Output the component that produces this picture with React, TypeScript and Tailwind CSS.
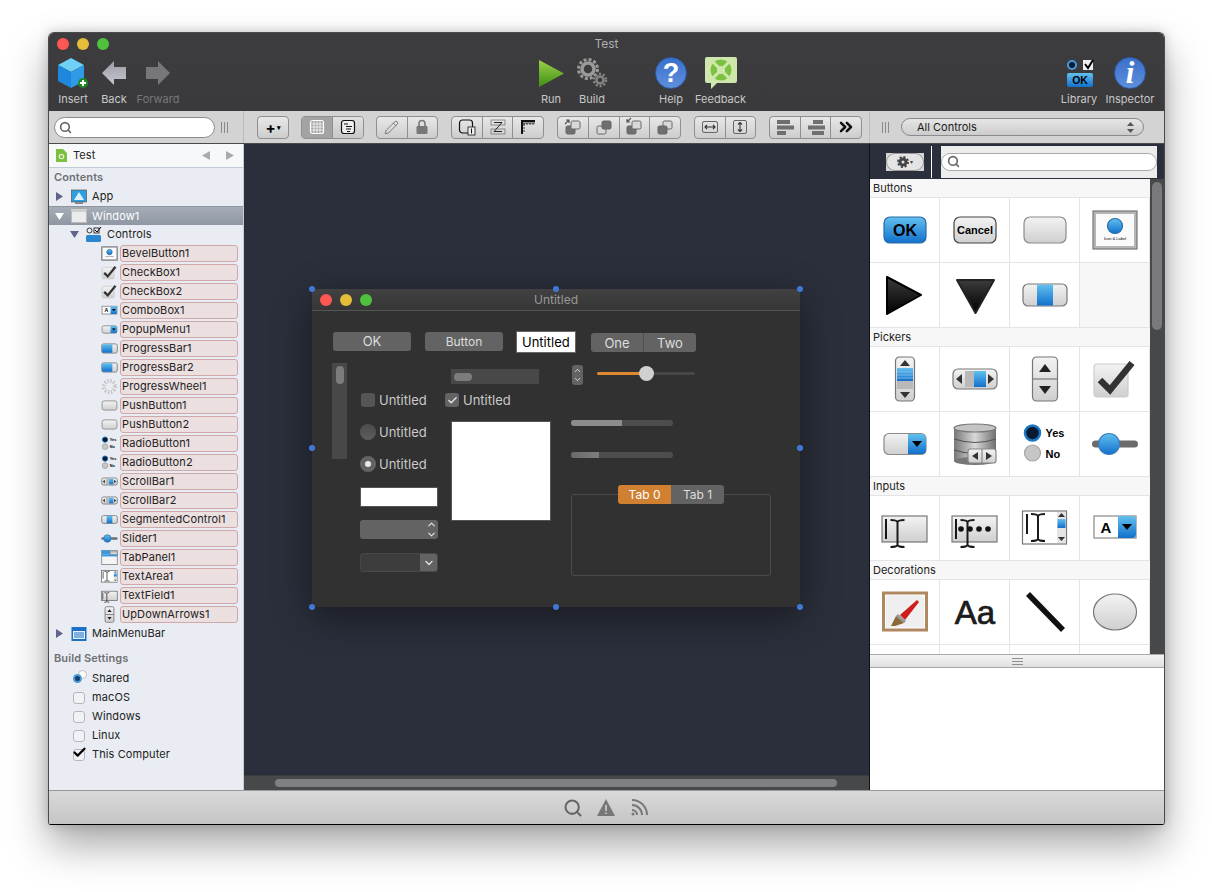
import type { ReactNode } from 'react';
import { ChevronsRight, ChevronDown, ChevronUp, Pencil, Search, Check } from 'lucide-react';

const Svg = ({ s = 48, children }: { s?: number; children: ReactNode }) => (
  <svg width={s} height={s} viewBox="0 0 48 48" strokeWidth={s < 30 ? 2.4 : 1.2} className="shrink-0">
    {children}
  </svg>
);

const Defs = () => (
  <svg className="absolute w-0 h-0">
    <defs>
      <linearGradient id="blue" x1="0" y1="0" x2="0" y2="1">
        <stop offset="0" stopColor="#62c0ee" />
        <stop offset="1" stopColor="#1270cc" />
      </linearGradient>
      <linearGradient id="gray" x1="0" y1="0" x2="0" y2="1">
        <stop offset="0" stopColor="#f3f3f3" />
        <stop offset="1" stopColor="#cfcfcf" />
      </linearGradient>
      <linearGradient id="dark" x1="0" y1="0" x2="0" y2="1">
        <stop offset="0" stopColor="#3c3c3c" />
        <stop offset="1" stopColor="#000" />
      </linearGradient>
      <linearGradient id="metal" x1="0" y1="0" x2="1" y2="0">
        <stop offset="0" stopColor="#777" />
        <stop offset="0.5" stopColor="#d9d9d9" />
        <stop offset="1" stopColor="#6f6f6f" />
      </linearGradient>
      <linearGradient id="run" x1="0" y1="0" x2="0" y2="1">
        <stop offset="0" stopColor="#9ad04a" />
        <stop offset="1" stopColor="#3f8f12" />
      </linearGradient>
      <linearGradient id="arrow" x1="0" y1="0" x2="0" y2="1">
        <stop offset="0" stopColor="#9d9da8" />
        <stop offset="1" stopColor="#c6c6d0" />
      </linearGradient>
    </defs>
  </svg>
);

const OkBtn = ({ s }: { s?: number }) => (
  <Svg s={s}>
    <rect x="3" y="11" width="42" height="26" rx="6" fill="url(#blue)" stroke="#2a6aa8" />
    <text x="24" y="30" textAnchor="middle" fontSize="16" fontWeight="700" fontFamily="Liberation Sans">OK</text>
  </Svg>
);
const CancelBtn = ({ s }: { s?: number }) => (
  <Svg s={s}>
    <rect x="3" y="11" width="42" height="26" rx="6" fill="url(#gray)" stroke="#444" />
    <text x="24" y="28" textAnchor="middle" fontSize="11" fontWeight="700" fontFamily="Liberation Sans">Cancel</text>
  </Svg>
);
const PushBtn = ({ s }: { s?: number }) => (
  <Svg s={s}>
    <rect x="3" y="11" width="42" height="26" rx="6" fill="url(#gray)" stroke="#8a8a8a" />
  </Svg>
);
const Bevel = ({ s }: { s?: number }) => (
  <Svg s={s}>
    <rect x="2" y="5" width="44" height="38" fill="#b5b5b5" stroke="#777" />
    <rect x="5" y="8" width="38" height="32" fill="#fafafa" />
    <circle cx="24" cy="20" r="7.5" fill="url(#blue)" stroke="#2a6aa8" />
    <text x="24" y="34" textAnchor="middle" fontSize="4" fontFamily="Liberation Sans">Icon &amp; Label</text>
  </Svg>
);
const DiscRight = () => (
  <Svg>
    <polygon points="6,6 40,24 6,43" fill="url(#dark)" stroke="#000" strokeWidth="2" strokeLinejoin="round" />
  </Svg>
);
const DiscDown = () => (
  <Svg>
    <polygon points="6,9 43,9 24.5,42" fill="url(#dark)" stroke="#222" strokeWidth="2" strokeLinejoin="round" />
  </Svg>
);
const Segment = ({ s }: { s?: number }) => (
  <Svg s={s}>
    <rect x="2" y="13" width="44" height="22" rx="5" fill="url(#gray)" stroke="#777" />
    <rect x="16" y="13.5" width="16" height="21" fill="url(#blue)" />
  </Svg>
);
const Progress = ({ s }: { s?: number }) => (
  <Svg s={s}>
    <rect x="2" y="11" width="44" height="26" rx="5" fill="url(#gray)" stroke="#777" />
    <rect x="3" y="12" width="29" height="24" rx="3" fill="url(#blue)" />
  </Svg>
);
const VScroll = () => (
  <Svg>
    <rect x="14.5" y="2" width="19" height="44" rx="4" fill="url(#gray)" stroke="#777" />
    <polygon points="24,5 29,11 19,11" fill="#333" />
    <rect x="16" y="13" width="16" height="13" fill="url(#blue)" />
    <path d="M16 17H32M16 20H32M16 23H32" stroke="#a8d4f2" strokeWidth="0.6" />
    <rect x="16" y="26" width="16" height="8" fill="#b9b9b9" />
    <polygon points="24,43 29,37 19,37" fill="#333" />
  </Svg>
);
const HScroll = ({ s }: { s?: number }) => (
  <Svg s={s}>
    <rect x="2" y="14" width="44" height="20" rx="5" fill="url(#gray)" stroke="#777" />
    <polygon points="5,24 11,19 11,29" fill="#333" />
    <rect x="14" y="16" width="9" height="16" fill="#b9b9b9" />
    <rect x="23" y="16" width="12" height="16" fill="url(#blue)" />
    <polygon points="43,24 37,19 37,29" fill="#333" />
  </Svg>
);
const UpDown = ({ s }: { s?: number }) => (
  <Svg s={s}>
    <rect x="11.5" y="2" width="25" height="44" rx="4" fill="url(#gray)" stroke="#777" />
    <line x1="11.5" y1="24" x2="36.5" y2="24" stroke="#777" />
    <polygon points="24,9 30,17 18,17" fill="#222" />
    <polygon points="24,39 30,31 18,31" fill="#222" />
  </Svg>
);
const CheckIcon = ({ s }: { s?: number }) => (
  <Svg s={s}>
    <rect x="3" y="9" width="34" height="33" rx="3" fill="url(#gray)" stroke="#ccc" />
    <path d="M9 25 L19 35 L41 8" fill="none" stroke="#333" strokeWidth="6.5" strokeLinejoin="miter" />
  </Svg>
);
const Popup = ({ s }: { s?: number }) => (
  <Svg s={s}>
    <rect x="3" y="13.5" width="42" height="21" rx="5" fill="url(#gray)" stroke="#8a8a8a" />
    <path d="M27 14 H41 a4 4 0 0 1 4 4 V30 a4 4 0 0 1 -4 4 H27 Z" fill="url(#blue)" />
    <polygon points="31,21 41,21 36,27" fill="#000" />
  </Svg>
);
const Db = () => (
  <Svg>
    <rect x="3" y="8" width="42" height="33" fill="url(#metal)" />
    <ellipse cx="24" cy="8" rx="21" ry="4" fill="#c4c4c4" stroke="#777" />
    <path d="M3 19 Q24 26 45 19 M3 30 Q24 37 45 30" fill="none" stroke="#555" />
    <ellipse cx="24" cy="41" rx="21" ry="4" fill="#777" />
    <rect x="17" y="29" width="28" height="14" rx="2.5" fill="url(#gray)" stroke="#888" />
    <line x1="31" y1="29" x2="31" y2="43" stroke="#888" />
    <polygon points="21,36 27,32 27,40" fill="#333" />
    <polygon points="41,36 35,32 35,40" fill="#333" />
  </Svg>
);
const Radio = ({ s }: { s?: number }) => (
  <Svg s={s}>
    <circle cx="11.5" cy="13" r="7.5" fill="#0a1a33" stroke="#1a78c2" strokeWidth="2.5" />
    <circle cx="11.5" cy="33" r="8" fill="#c6c6c6" stroke="#a5a5a5" />
    <text x="24.5" y="17" fontSize="11" fontWeight="700" fontFamily="Liberation Sans">Yes</text>
    <text x="24.5" y="38" fontSize="11" fontWeight="700" fontFamily="Liberation Sans">No</text>
  </Svg>
);
const Slider = ({ s }: { s?: number }) => (
  <Svg s={s}>
    <rect x="1" y="20.5" width="46" height="7" rx="3.5" fill="#6b6b6b" />
    <circle cx="18" cy="24" r="10.5" fill="url(#blue)" stroke="#3a7fb8" />
  </Svg>
);
const Ibeam = ({ x, y1, y2 }: { x: number; y1: number; y2: number }) => (
  <path
    d={`M${x - 7} ${y1} Q${x - 1} ${y1} ${x} ${y1 + 2} Q${x + 1} ${y1} ${x + 7} ${y1} M${x} ${y1 + 2} V${y2 - 2} M${x - 7} ${y2} Q${x - 1} ${y2} ${x} ${y2 - 2} Q${x + 1} ${y2} ${x + 7} ${y2}`}
    fill="none"
    stroke="#1a1a1a"
    strokeWidth="2"
  />
);
const TextField = ({ s }: { s?: number }) => (
  <Svg s={s}>
    <rect x="1" y="12" width="45" height="26" fill="url(#gray)" stroke="#777" />
    <line x1="5" y1="15" x2="5" y2="35" stroke="#000" strokeWidth="1.8" />
    <Ibeam x={16.5} y1={16} y2={43} />
  </Svg>
);
const Password = () => (
  <Svg>
    <rect x="1" y="12" width="45" height="26" fill="url(#gray)" stroke="#777" />
    <line x1="5" y1="15" x2="5" y2="35" stroke="#000" strokeWidth="1.8" />
    <Ibeam x={16.5} y1={16} y2={43} />
    <circle cx="10" cy="25" r="2.8" fill="#111" />
    <circle cx="19" cy="25" r="2.8" fill="#111" />
    <circle cx="28" cy="25" r="2.8" fill="#111" />
    <circle cx="37" cy="25" r="2.8" fill="#111" />
  </Svg>
);
const TextArea = ({ s }: { s?: number }) => (
  <Svg s={s}>
    <rect x="1.5" y="7" width="44" height="33" fill="#fff" stroke="#777" />
    <line x1="6" y1="10" x2="6" y2="30" stroke="#000" strokeWidth="1.8" />
    <Ibeam x={17} y1={10} y2={37} />
    <rect x="36" y="8" width="9" height="31" fill="#e4e4e4" />
    <polygon points="40.5,9 44,13 37,13" fill="#333" />
    <rect x="36.5" y="15" width="8" height="9" fill="url(#blue)" />
    <polygon points="40.5,37 44,33 37,33" fill="#333" />
  </Svg>
);
const Combo = ({ s }: { s?: number }) => (
  <Svg s={s}>
    <rect x="3" y="12" width="42" height="22" fill="#fff" stroke="#888" />
    <path d="M27 12 H41 a4 4 0 0 1 4 4 V30 a4 4 0 0 1 -4 4 H27 Z" fill="url(#blue)" />
    <text x="15" y="29" textAnchor="middle" fontSize="15" fontWeight="700" fontFamily="Liberation Sans">A</text>
    <polygon points="31,20 41,20 36,26" fill="#000" />
  </Svg>
);
const CanvasIcon = () => (
  <Svg>
    <rect x="2.5" y="5" width="43" height="37" fill="#fff" stroke="#b08860" strokeWidth="3" />
    <rect x="5" y="7.5" width="38" height="32" fill="#efefef" />
    <path d="M19 27 L36 12 L38 14 L24 32 Z" fill="#cf1c1c" />
    <path d="M17 26 L25 33 L23 35 L15 28 Z" fill="#999" />
    <path d="M15 28 L23 35 L14 38 L10 38 Z" fill="#8a6a3a" />
  </Svg>
);
const AaIcon = () => (
  <Svg>
    <text x="24" y="36" textAnchor="middle" fontSize="33" fontFamily="Liberation Sans" fill="#1c1c1c" stroke="#1c1c1c" strokeWidth="0.7">Aa</text>
  </Svg>
);
const LineIcon = () => (
  <Svg>
    <line x1="7" y1="6" x2="42" y2="42" stroke="#111" strokeWidth="5.5" />
  </Svg>
);
const Oval = () => (
  <Svg>
    <ellipse cx="24" cy="24" rx="21.5" ry="18" fill="url(#gray)" stroke="#777" />
  </Svg>
);
const Spinner = ({ s }: { s?: number }) => (
  <Svg s={s}>
    <circle cx="24" cy="24" r="16" fill="none" stroke="#c4c4c4" strokeWidth="11" strokeDasharray="4 4.4" />
  </Svg>
);
const TabPanel = ({ s }: { s?: number }) => (
  <Svg s={s}>
    <rect x="2" y="4" width="44" height="40" fill="#f4f4f4" stroke="#888" />
    <rect x="2" y="4" width="24" height="12" fill="#3b97dc" />
    <rect x="26" y="8" width="20" height="8" fill="#ddd" stroke="#888" />
    <rect x="2" y="16" width="44" height="5" fill="#3b97dc" />
  </Svg>
);

const Light = ({ c }: { c: string }) => <div className={`w-3 h-3 rounded-full ${c}`} />;

const Tool = ({ label, w, ml, dim, children }: { label: string; w: string; ml?: string; dim?: boolean; children: ReactNode }) => (
  <div className={`flex flex-col items-center ${w} ${ml ?? ''}`}>
    <div className="h-[36px] flex items-center justify-center">{children}</div>
    <div className={`mt-[1px] text-[11px] leading-[14px] whitespace-nowrap ${dim ? 'text-[#77777a]' : 'text-[#c8c8c8]'}`}>{label}</div>
  </div>
);

const Seg = ({ w, ml, children }: { w: string; ml: string; children: ReactNode[] }) => (
  <div className={`flex h-[23px] ${w} ${ml} rounded-[4px] border border-[#8f8f8f] bg-linear-to-b from-[#e8e8e8] to-[#cdcdcd] divide-x divide-[#8f8f8f] overflow-hidden`}>
    {children.map((c, i) => (
      <div key={i} className="flex-1 flex items-center justify-center">{c}</div>
    ))}
  </div>
);

const Ticks = () => (
  <div className="flex gap-[2px] h-[11px]">
    <div className="w-px bg-[#8a8a8a]" />
    <div className="w-px bg-[#8a8a8a]" />
    <div className="w-px bg-[#8a8a8a]" />
  </div>
);

const I20 = ({ children }: { children: ReactNode }) => (
  <svg width="20" height="20" viewBox="0 0 20 20" fill="none">{children}</svg>
);

const Overlap = ({ top, arrow }: { top: boolean; arrow?: 'up' | 'down' }) => (
  <I20>
    <rect x="3" y="9" width="9" height="8" rx="1.5" fill={top ? '#d8d8d8' : '#6f6f6f'} stroke="#666" />
    <rect x="8" y="4" width="9" height="8" rx="1.5" fill={top ? '#6f6f6f' : '#d8d8d8'} stroke="#666" />
    {arrow === 'up' && <path d="M2 7 L6 3 M3 3 H6 V6" stroke="#555" strokeWidth="1.2" />}
    {arrow === 'down' && <path d="M7 1 L3 5 M3 2 V5 H6" stroke="#555" strokeWidth="1.2" />}
  </I20>
);

const Toolbar = () => (
  <div className="h-[33px] flex items-center bg-[#d3d3d3] border-b border-[#4a4a4a]">
    <div className="w-[195px] h-full flex items-center border-r border-[#bbb] pl-[5px]">
      <div className="w-[161px] h-[21px] rounded-full bg-white border border-[#8a8a8a] flex items-center pl-[4px]">
        <Search size={13} strokeWidth={3} className="text-[#666]" />
      </div>
      <div className="ml-[6px]"><Ticks /></div>
    </div>
    <Seg w="w-[32px]" ml="ml-[13px]">
      {[<span key="a" className="flex items-center font-bold text-[15px] leading-none text-black">+<span className="text-[7px] ml-[1px]">▾</span></span>]}
    </Seg>
    <div className="ml-[12px] flex h-[23px] w-[63px] rounded-[4px] border border-[#8f8f8f] overflow-hidden">
      <div className="flex-1 bg-[#a3a3a3] flex items-center justify-center border-r border-[#8f8f8f]">
        <I20>
          <rect x="3.5" y="3.5" width="13" height="13" rx="2" stroke="#fff" strokeWidth="1.2" />
          <path d="M7 4V16M10 4V16M13 4V16M4 7H16M4 10H16M4 13H16" stroke="#fff" strokeWidth="0.8" />
        </I20>
      </div>
      <div className="flex-1 bg-linear-to-b from-[#e0e0e0] to-[#c8c8c8] flex items-center justify-center">
        <I20>
          <rect x="3.5" y="3.5" width="13" height="13" rx="2.5" fill="#eee" stroke="#111" strokeWidth="1.2" />
          <path d="M6 7H10M8 9.5H14M8 12H13M9 14.5H12" stroke="#111" strokeWidth="1" />
        </I20>
      </div>
    </div>
    <Seg w="w-[62px]" ml="ml-[12px]">
      {[
        <Pencil key="p" size={15} strokeWidth={1} className="text-[#444]" />,
        <I20 key="l">
          <rect x="4.5" y="9" width="11" height="8" rx="1" fill="#777" />
          <path d="M7 9V6.5a3 3 0 0 1 6 0V9" stroke="#777" strokeWidth="1.6" />
        </I20>,
      ]}
    </Seg>
    <Seg w="w-[93px]" ml="ml-[13px]">
      {[
        <I20 key="a">
          <rect x="2.5" y="3" width="13" height="13" rx="3" stroke="#111" strokeWidth="1.2" />
          <rect x="11" y="10" width="7" height="8" fill="#eee" stroke="#111" strokeWidth="0.8" />
          <path d="M14.5 11.5V16.5" stroke="#111" />
        </I20>,
        <I20 key="b">
          <rect x="3" y="3" width="14" height="5" stroke="#777" strokeWidth="0.8" />
          <rect x="3" y="12" width="14" height="5" stroke="#777" strokeWidth="0.8" />
          <path d="M6 5.5H14L6 14.5H14" stroke="#222" strokeWidth="1" />
        </I20>,
        <I20 key="c">
          <path d="M3 3H17V5H5V17H3Z" fill="#111" />
          <path d="M5 6H17M6 6V8M9 6V8M12 6V8M15 6V8M3 8H7M3 11H7M3 14H7" stroke="#111" strokeWidth="0.8" />
        </I20>,
      ]}
    </Seg>
    <Seg w="w-[124px]" ml="ml-[13px]">
      {[
        <Overlap key="a" top={false} arrow="up" />,
        <Overlap key="b" top />,
        <Overlap key="c" top={false} arrow="down" />,
        <I20 key="d">
          <rect x="8" y="4" width="9" height="8" rx="1.5" fill="#d8d8d8" stroke="#666" />
          <rect x="3" y="9" width="9" height="8" rx="1.5" fill="#6f6f6f" stroke="#666" />
        </I20>,
      ]}
    </Seg>
    <Seg w="w-[62px]" ml="ml-[13px]">
      {[
        <I20 key="a">
          <rect x="2.5" y="4.5" width="15" height="11" rx="1.5" stroke="#666" />
          <path d="M5 10H15M7 8L5 10L7 12M13 8L15 10L13 12" stroke="#333" strokeWidth="1.1" />
        </I20>,
        <I20 key="b">
          <rect x="3.5" y="3.5" width="13" height="13" rx="1.5" stroke="#666" />
          <path d="M10 5.5V14.5M8 7.5L10 5.5L12 7.5M8 12.5L10 14.5L12 12.5" stroke="#333" strokeWidth="1.1" />
        </I20>,
      ]}
    </Seg>
    <Seg w="w-[93px]" ml="ml-[13px]">
      {[
        <I20 key="a">
          <rect x="2" y="3" width="13" height="4" fill="#6f6f6f" />
          <rect x="2" y="8.5" width="17" height="4" fill="#6f6f6f" />
          <rect x="2" y="14" width="9" height="4" fill="#6f6f6f" />
        </I20>,
        <I20 key="b">
          <rect x="7" y="3" width="10" height="4" fill="#6f6f6f" />
          <rect x="2" y="8.5" width="17" height="4" fill="#6f6f6f" />
          <rect x="6" y="14" width="12" height="4" fill="#6f6f6f" />
        </I20>,
        <ChevronsRight key="c" size={20} strokeWidth={3} className="text-[#111]" />,
      ]}
    </Seg>
    <div className="ml-[7px] w-px h-full bg-[#bbb]" />
    <div className="ml-[12px]"><Ticks /></div>
    <div className="ml-[12px] w-[243px] h-[18px] rounded-full border border-[#8a8a8a] bg-linear-to-b from-[#e6e6e6] to-[#cccccc] flex items-center justify-between pl-[15px] pr-[9px] text-[11px] text-[#1a1a1a]">
      <span>All Controls</span>
      <svg width="7" height="11" viewBox="0 0 7 11">
        <polygon points="3.5,0 7,4 0,4" fill="#555" />
        <polygon points="3.5,11 7,7 0,7" fill="#555" />
      </svg>
    </div>
  </div>
);

const TreeItems: [string, (p: { s?: number }) => ReactNode][] = [
  ['BevelButton1', Bevel],
  ['CheckBox1', CheckIcon],
  ['CheckBox2', CheckIcon],
  ['ComboBox1', Combo],
  ['PopupMenu1', Popup],
  ['ProgressBar1', Progress],
  ['ProgressBar2', Progress],
  ['ProgressWheel1', Spinner],
  ['PushButton1', PushBtn],
  ['PushButton2', PushBtn],
  ['RadioButton1', Radio],
  ['RadioButton2', Radio],
  ['ScrollBar1', HScroll],
  ['ScrollBar2', HScroll],
  ['SegmentedControl1', Segment],
  ['Slider1', Slider],
  ['TabPanel1', TabPanel],
  ['TextArea1', TextArea],
  ['TextField1', TextField],
  ['UpDownArrows1', UpDown],
];

const Tri = ({ down, white }: { down?: boolean; white?: boolean }) => (
  <svg width="9" height="9" viewBox="0 0 9 9" className="shrink-0">
    <polygon points={down ? '0,1 9,1 4.5,8' : '1,0 8,4.5 1,9'} fill={white ? '#fff' : '#62628a'} />
  </svg>
);

const CheckRow = ({ label, on, radio }: { label: string; on?: boolean; radio?: boolean }) => (
  <div className="h-[19px] flex items-center pl-[24px] text-[#222]">
    <div className="w-[12px] h-[12px] relative">
      {radio ? (
        <>
          <div className="absolute left-[5px] top-[-3px] w-[9px] h-[9px] rounded-full bg-white border border-[#bdbdbd]" />
          <div className="absolute left-[0px] top-[1px] w-[9px] h-[9px] rounded-full bg-[#123f6f] border-[2px] border-[#4b9ad6]" />
        </>
      ) : (
        <div className="w-[12px] h-[12px] rounded-[3px] border border-[#b4b8be] bg-[#f0f2f5]" />
      )}
      {on && <Check size={15} strokeWidth={3.5} className="absolute left-[-1px] top-[-4px] text-black" />}
    </div>
    <span className="ml-[7px] text-[11px] tracking-[0.1px]">{label}</span>
  </div>
);

const Sidebar = () => (
  <div className="w-[195px] shrink-0 bg-[#e9edf3] border-r border-[#c8ccd2] text-[11px] tracking-[0.1px] text-[#222]">
    <div className="h-[24px] bg-[#f7f8fa] border-b border-[#c3ccd6] flex items-center pl-[7px]">
      <svg width="11" height="13" viewBox="0 0 11 13">
        <path d="M0 0H7L11 4V13H0Z" fill="#7cc040" />
        <circle cx="5.5" cy="7.5" r="2.2" fill="none" stroke="#e4f4d0" strokeWidth="1.2" />
      </svg>
      <span className="ml-[6px]">Test</span>
      <div className="ml-auto mr-[8px] flex gap-[16px]">
        <svg width="9" height="9" viewBox="0 0 9 9"><polygon points="9,0 9,9 1,4.5" fill="#aaa" /></svg>
        <svg width="9" height="9" viewBox="0 0 9 9"><polygon points="0,0 0,9 8,4.5" fill="#aaa" /></svg>
      </div>
    </div>
    <div className="h-[19px] flex items-center pl-[5px] font-semibold text-[#6f7073]">Contents</div>
    <div className="h-[19px] flex items-center pl-[6px]">
      <Tri />
      <svg width="16" height="16" viewBox="0 0 16 16" className="ml-[7px]">
        <rect x="0.5" y="1" width="15" height="12" fill="#2f9fe0" stroke="#555" strokeWidth="0.7" />
        <path d="M8 3L3 11H13Z" fill="#dff1ff" />
        <rect x="4" y="13" width="8" height="2" fill="#888" />
      </svg>
      <span className="ml-[5px]">App</span>
    </div>
    <div className="h-[19px] flex items-center pl-[6px] bg-linear-to-b from-[#a6adb7] to-[#8e97a3] border-t border-[#8e96a1] text-white">
      <Tri down white />
      <div className="ml-[7px] w-[16px] h-[14px] bg-[#ececec] border border-[#bbb] border-t-[3px] border-t-[#d0d0d0]" />
      <span className="ml-[5px]">Window1</span>
    </div>
    <div className="h-[19px] flex items-center pl-[21px]">
      <Tri down />
      <svg width="16" height="16" viewBox="0 0 16 16" className="ml-[7px]">
        <circle cx="3.5" cy="3.5" r="2.5" fill="none" stroke="#333" />
        <rect x="8" y="1" width="5" height="5" fill="none" stroke="#333" />
        <path d="M9 3L11 5L15 0" fill="none" stroke="#000" />
        <rect x="0" y="8" width="15" height="7" rx="1.5" fill="#2a86d0" />
      </svg>
      <span className="ml-[5px]">Controls</span>
    </div>
    {TreeItems.map(([name, Icon]) => (
      <div key={name} className="h-[19px] flex items-center pl-[52px]">
        <Icon s={17} />
        <div className="ml-[2px] w-[118px] h-[17px] rounded-[3px] bg-[#ebdfe0] border border-[#cfa9a9] pl-[1px] leading-[15px]">{name}</div>
      </div>
    ))}
    <div className="h-[19px] flex items-center pl-[6px]">
      <Tri />
      <svg width="16" height="16" viewBox="0 0 16 16" className="ml-[7px]">
        <rect x="0.5" y="1" width="15" height="14" fill="#1f6fc4" />
        <rect x="2" y="5" width="12" height="8" fill="#e6f0fa" />
        <path d="M3 7H13M3 9H13M3 11H13" stroke="#1f6fc4" />
      </svg>
      <span className="ml-[5px]">MainMenuBar</span>
    </div>
    <div className="h-[26px] flex items-end pb-[3px] pl-[5px] font-semibold text-[#6f7073]">Build Settings</div>
    <CheckRow label="Shared" radio />
    <CheckRow label="macOS" />
    <CheckRow label="Windows" />
    <CheckRow label="Linux" />
    <CheckRow label="This Computer" on />
  </div>
);

const Handle = ({ c }: { c: string }) => (
  <div className={`absolute w-[6px] h-[6px] rounded-full bg-[#3f79d8] ${c}`} />
);

const Untitled = ({ c }: { c: string }) => (
  <span className={`absolute text-[13px] leading-[16px] text-[#c9c9c9] ${c}`}>Untitled</span>
);

const DesignWindow = () => (
  <div className="absolute left-[68px] top-[145px] w-[488px] h-[318px] bg-[#313131] shadow-[0_10px_36px_rgba(0,0,0,0.45)]">
    <div className="h-[22px] bg-linear-to-b from-[#414141] to-[#363636] border-b border-[#565656] grid grid-cols-[1fr_auto_1fr] items-center">
      <div className="flex gap-[8px] pl-[8px]">
        <Light c="bg-[#fc5753]" />
        <Light c="bg-[#e6bd3b]" />
        <Light c="bg-[#4fc23d]" />
      </div>
      <span className="text-[12px] text-[#999]">Untitled</span>
    </div>

    <div className="absolute left-[21px] top-[43px] w-[78px] h-[19px] rounded-[3px] bg-[#636363] text-[13px] text-[#ddd] text-center leading-[19px]">OK</div>
    <div className="absolute left-[113px] top-[43px] w-[78px] h-[19px] rounded-[3px] bg-[#636363] text-[12px] text-[#ddd] text-center leading-[19px]">Button</div>
    <div className="absolute left-[204px] top-[42px] w-[60px] h-[22px] bg-white border border-[#666] text-[13px] text-black pl-[5px] leading-[21px]">Untitled</div>
    <div className="absolute left-[279px] top-[44px] w-[105px] h-[19px] rounded-[3px] bg-[#636363] flex text-[13px] text-[#ddd] leading-[20px]">
      <div className="w-[53px] text-center border-r border-[#505050]">One</div>
      <div className="flex-1 text-center">Two</div>
    </div>

    <div className="absolute left-[20px] top-[74px] w-[15px] h-[96px] bg-[#484848]">
      <div className="ml-[4px] mt-[3px] w-[8px] h-[18px] rounded-full bg-[#7c7c7c]" />
    </div>
    <div className="absolute left-[139px] top-[80px] w-[88px] h-[15px] bg-[#484848]">
      <div className="ml-[3px] mt-[4px] w-[18px] h-[8px] rounded-full bg-[#7c7c7c]" />
    </div>

    <div className="absolute left-[49px] top-[104px] w-[14px] h-[14px] rounded-[3px] bg-[#555]" />
    <Untitled c="left-[67px] top-[103px]" />
    <div className="absolute left-[133px] top-[104px] w-[14px] h-[14px] rounded-[3px] bg-[#636363] flex items-center justify-center">
      <Check size={11} strokeWidth={3} className="text-[#e4e4e4]" />
    </div>
    <Untitled c="left-[151px] top-[103px]" />
    <div className="absolute left-[48px] top-[135px] w-[16px] h-[16px] rounded-full bg-linear-to-b from-[#4c4c4c] to-[#5c5c5c]" />
    <Untitled c="left-[67px] top-[135px]" />
    <div className="absolute left-[48px] top-[167px] w-[16px] h-[16px] rounded-full bg-[#636363] flex items-center justify-center">
      <div className="w-[6px] h-[6px] rounded-full bg-[#e8e8e8]" />
    </div>
    <Untitled c="left-[67px] top-[167px]" />

    <div className="absolute left-[48px] top-[198px] w-[78px] h-[20px] bg-white border border-[#555]" />
    <div className="absolute left-[139px] top-[132px] w-[100px] h-[100px] bg-white border border-[#555]" />
    <div className="absolute left-[48px] top-[231px] w-[78px] h-[19px] rounded-[3px] bg-[#636363] flex items-center justify-end pr-[1px]">
      <div className="flex flex-col -space-y-[1px]">
        <ChevronUp size={11} strokeWidth={2.5} className="text-[#e4e4e4]" />
        <ChevronDown size={11} strokeWidth={2.5} className="text-[#e4e4e4]" />
      </div>
    </div>
    <div className="absolute left-[48px] top-[264px] w-[78px] h-[19px] rounded-[3px] bg-[#3d3d3d] border border-[#484848] flex justify-end overflow-hidden">
      <div className="w-[17px] bg-[#636363] flex items-center justify-center">
        <ChevronDown size={12} strokeWidth={2.5} className="text-[#e4e4e4]" />
      </div>
    </div>

    <div className="absolute left-[260px] top-[76px] w-[11px] h-[20px] rounded-[3px] bg-[#636363] flex flex-col items-center justify-center">
      <ChevronUp size={9} strokeWidth={2.5} className="text-[#ddd]" />
      <ChevronDown size={9} strokeWidth={2.5} className="text-[#ddd]" />
    </div>
    <div className="absolute left-[285px] top-[83px] w-[98px] h-[3px] rounded-full bg-[#474747]">
      <div className="w-[45px] h-[3px] rounded-l-full bg-[#df8a2f]" />
    </div>
    <div className="absolute left-[327px] top-[77px] w-[15px] h-[15px] rounded-full bg-[#d0d0d0]" />

    <div className="absolute left-[259px] top-[131px] w-[102px] h-[6px] rounded-[3px] bg-[#4d4d4d] overflow-hidden">
      <div className="w-[51px] h-full bg-[#8c8c8c]" />
    </div>
    <div className="absolute left-[259px] top-[163px] w-[102px] h-[6px] rounded-[3px] bg-[#4d4d4d] overflow-hidden">
      <div className="w-[28px] h-full bg-linear-to-r from-[#6a6a6a] to-[#7e7e7e]" />
    </div>

    <div className="absolute left-[259px] top-[205px] w-[200px] h-[82px] rounded-[3px] border border-[#4b4b4b]" />
    <div className="absolute left-[306px] top-[196px] w-[106px] h-[19px] rounded-[3px] overflow-hidden flex text-[12px] leading-[19px]">
      <div className="w-[53px] bg-[#d08030] text-center text-white">Tab 0</div>
      <div className="flex-1 bg-[#636363] text-center text-[#ddd]">Tab 1</div>
    </div>

    <Handle c="left-[-3px] top-[-3px]" />
    <Handle c="left-[241px] top-[-3px]" />
    <Handle c="left-[485px] top-[-3px]" />
    <Handle c="left-[-3px] top-[156px]" />
    <Handle c="left-[485px] top-[156px]" />
    <Handle c="left-[-3px] top-[315px]" />
    <Handle c="left-[241px] top-[315px]" />
    <Handle c="left-[485px] top-[315px]" />
  </div>
);

const Section = ({ title, children }: { title: string; children: ReactNode[] }) => (
  <>
    <div className="h-[19px] bg-[#f7f7f7] border-b border-[#e4e4e4] pl-[3px] text-[11px] leading-[18px] text-[#222]">{title}</div>
    <div className="grid grid-cols-4">
      {children.map((c, i) => (
        <div key={i} className={`h-[65px] flex items-center justify-center border-r border-b border-[#e4e4e4] ${c ? 'bg-white' : 'bg-[#f7f7f7]'}`}>{c}</div>
      ))}
    </div>
  </>
);

const Library = () => (
  <div className="w-[294px] shrink-0 flex flex-col bg-white">
    <div className="h-[35px] bg-[#2b2f3b] flex items-center">
      <div className="ml-[16px] w-[38px] h-[18px] bg-[#d6d6d6]">
        <div className="h-[18px] rounded-full border border-[#9a9a9a] bg-[#e4e4e4] flex items-center justify-center text-[#444]">
          <svg width="12" height="12" viewBox="0 0 12 12">
            <circle cx="6" cy="6" r="3" fill="none" stroke="#444" strokeWidth="3" />
            <circle cx="6" cy="6" r="5" fill="none" stroke="#444" strokeWidth="2" strokeDasharray="2 1.9" />
          </svg>
          <span className="text-[6px] ml-[1px]">▾</span>
        </div>
      </div>
      <div className="ml-[7px] w-px h-[32px] bg-white" />
      <div className="ml-[9px] w-[216px] h-[32px] bg-[#ededed] flex items-center">
        <div className="w-full h-[18px] rounded-full bg-white border border-[#aaa] flex items-center pl-[5px]">
          <Search size={13} strokeWidth={3} className="text-[#666]" />
        </div>
      </div>
    </div>
    <div className="h-[475px] flex">
      <div className="w-[280px] overflow-hidden">
        <Section title="Buttons">
          {[<OkBtn key="1" />, <CancelBtn key="2" />, <PushBtn key="3" />, <Bevel key="4" />, <DiscRight key="5" />, <DiscDown key="6" />, <Segment key="7" />, null]}
        </Section>
        <Section title="Pickers">
          {[<VScroll key="1" />, <HScroll key="2" />, <UpDown key="3" />, <CheckIcon key="4" />, <Popup key="5" />, <Db key="6" />, <Radio key="7" />, <Slider key="8" />]}
        </Section>
        <Section title="Inputs">
          {[<TextField key="1" />, <Password key="2" />, <TextArea key="3" />, <Combo key="4" />]}
        </Section>
        <Section title="Decorations">
          {[<CanvasIcon key="1" />, <AaIcon key="2" />, <LineIcon key="3" />, <Oval key="4" />, <div key="5" />, <div key="6" />, <div key="7" />, <div key="8" />]}
        </Section>
      </div>
      <div className="w-[14px] bg-[#47484a] pt-[3px] pl-[2px]">
        <div className="w-[10px] h-[148px] rounded-full bg-[#7a7a7c]" />
      </div>
    </div>
    <div className="h-[14px] bg-linear-to-b from-[#f4f4f4] to-[#e0e0e0] border-y border-[#a8a8a8] flex items-center justify-center">
      <div className="w-[11px] h-[7px] border-y border-[#8f8f8f] flex items-center">
        <div className="w-full h-px bg-[#8f8f8f]" />
      </div>
    </div>
    <div className="flex-1 bg-white" />
  </div>
);

export default function App() {
  return (
    <div className="w-[1212px] h-[892px] bg-white pl-[48px] pt-[32px] overflow-hidden font-['Inter','Liberation_Sans',sans-serif]">
      <Defs />
      <div className="w-[1117px] h-[793px] flex flex-col rounded-t-[6px] rounded-b-[3px] border border-[#4a4a4a] border-b-black overflow-hidden shadow-[0_20px_40px_rgba(0,0,0,0.35),0_0_12px_rgba(0,0,0,0.18)]">
        <div className="h-[78px] bg-linear-to-b from-[#3d3d40] to-[#3a3a3c]">
          <div className="h-[22px] grid grid-cols-[1fr_auto_1fr] items-center">
            <div className="flex gap-[8px] pl-[8px]">
              <Light c="bg-[#fc5753]" />
              <Light c="bg-[#e6bd3b]" />
              <Light c="bg-[#4fc23d]" />
            </div>
            <span className="text-[12px] text-[#b0b0b0]">Test</span>
          </div>
          <div className="flex pl-[4px]">
            <Tool label="Insert" w="w-[40px]">
              <svg width="34" height="34" viewBox="0 0 34 34">
                <polygon points="15,2 28,9 15,16 2,9" fill="#6fd0f6" />
                <polygon points="2,9 15,16 15,32 2,25" fill="#1f87dc" />
                <polygon points="28,9 15,16 15,32 28,25" fill="#2f9ae6" />
                <circle cx="27" cy="27" r="5" fill="#1d8a2a" />
                <path d="M27 24V30M24 27H30" stroke="#fff" strokeWidth="2" />
              </svg>
            </Tool>
            <Tool label="Back" w="w-[42px]">
              <svg width="24" height="24" viewBox="0 0 24 24">
                <polygon points="0,12 12,0 12,6 24,6 24,18 12,18 12,24" fill="url(#arrow)" />
              </svg>
            </Tool>
            <Tool label="Forward" w="w-[46px]" dim>
              <svg width="24" height="24" viewBox="0 0 24 24">
                <polygon points="24,12 12,0 12,6 0,6 0,18 12,18 12,24" fill="#77777b" />
              </svg>
            </Tool>
            <Tool label="Run" w="w-[40px]" ml="ml-[350px]">
              <svg width="25" height="27" viewBox="0 0 25 27">
                <polygon points="0,0 25,13.5 0,27" fill="url(#run)" />
              </svg>
            </Tool>
            <Tool label="Build" w="w-[42px]">
              <svg width="32" height="30" viewBox="0 0 32 30" fill="none">
                <circle cx="12" cy="11" r="6" stroke="#9a9a9a" strokeWidth="3.5" />
                <circle cx="12" cy="11" r="9.5" stroke="#9a9a9a" strokeWidth="3" strokeDasharray="3 2" />
                <circle cx="24" cy="22" r="3.5" stroke="#858585" strokeWidth="2.5" />
                <circle cx="24" cy="22" r="6" stroke="#858585" strokeWidth="2.5" strokeDasharray="2 1.8" />
              </svg>
            </Tool>
            <Tool label="Help" w="w-[42px]" ml="ml-[37px]">
              <div className="w-[32px] h-[32px] rounded-full bg-linear-to-b from-[#3a70cc] to-[#5f8fdc] border border-[#2b5cab] flex items-center justify-center text-white font-bold text-[27px] font-['Liberation_Sans',sans-serif]">?</div>
            </Tool>
            <Tool label="Feedback" w="w-[57px]">
              <svg width="32" height="32" viewBox="0 0 32 32">
                <path d="M2 0H30a2 2 0 0 1 2 2V24a2 2 0 0 1-2 2H12L6 32V26H2a2 2 0 0 1-2-2V2a2 2 0 0 1 2-2Z" fill="#cfe6ad" />
                <circle cx="16" cy="13" r="10.5" fill="#7cc13f" />
                <path d="M8 5L24 21M24 5L8 21" stroke="#cfe6ad" strokeWidth="3" />
                <circle cx="16" cy="13" r="4" fill="#cfe6ad" />
              </svg>
            </Tool>
            <Tool label="Library" w="w-[50px]" ml="ml-[305px]">
              <svg width="36" height="36" viewBox="0 0 36 36">
                <circle cx="11" cy="10" r="4" fill="#0a1a33" stroke="#4a9ad8" strokeWidth="2" />
                <rect x="22" y="5" width="10" height="10" fill="#eee" />
                <path d="M24 9L27 13L32 5" fill="none" stroke="#000" strokeWidth="2" />
                <rect x="6" y="18" width="26" height="14" rx="2" fill="url(#blue)" />
                <text x="19" y="29" textAnchor="middle" fontSize="10.5" fontWeight="700" fontFamily="Liberation Sans">OK</text>
              </svg>
            </Tool>
            <Tool label="Inspector" w="w-[52px]">
              <div className="w-[32px] h-[32px] rounded-full bg-linear-to-b from-[#3a70cc] to-[#5f8fdc] border border-[#2b5cab] flex items-center justify-center text-white font-bold italic text-[31px] font-['Liberation_Serif',serif]">i</div>
            </Tool>
          </div>
        </div>
        <Toolbar />
        <div className="flex h-[646px]">
          <Sidebar />
          <div className="w-[626px] shrink-0 flex flex-col border-r border-[#111]">
            <div className="flex-1 relative bg-[#2b2f3b]">
              <DesignWindow />
            </div>
            <div className="h-[15px] bg-[#47484a] border-t border-[#3a3b3d] pt-[3px] pl-[31px]">
              <div className="w-[562px] h-[8px] rounded-full bg-[#7f8082]" />
            </div>
          </div>
          <Library />
        </div>
        <div className="flex-1 bg-linear-to-b from-[#d8d9d8] to-[#c4c5c4] border-t border-[#999] flex items-center justify-center gap-[13px] pr-[2px]">
          <Search size={20} strokeWidth={2.5} className="text-[#666]" />
          <svg width="20" height="20" viewBox="0 0 20 20">
            <polygon points="10,1 19,18 1,18" fill="#777" />
            <path d="M10 7V13M10 14.5V16" stroke="#d0d0d0" strokeWidth="1.6" />
          </svg>
          <svg width="20" height="20" viewBox="0 0 20 20" fill="none" stroke="#777" strokeWidth="2">
            <path d="M3 2a15 15 0 0 1 15 15M3 7a10 10 0 0 1 10 10M3 12a5 5 0 0 1 5 5" />
            <circle cx="4" cy="16" r="1.5" fill="#777" stroke="none" />
          </svg>
        </div>
      </div>
    </div>
  );
}
